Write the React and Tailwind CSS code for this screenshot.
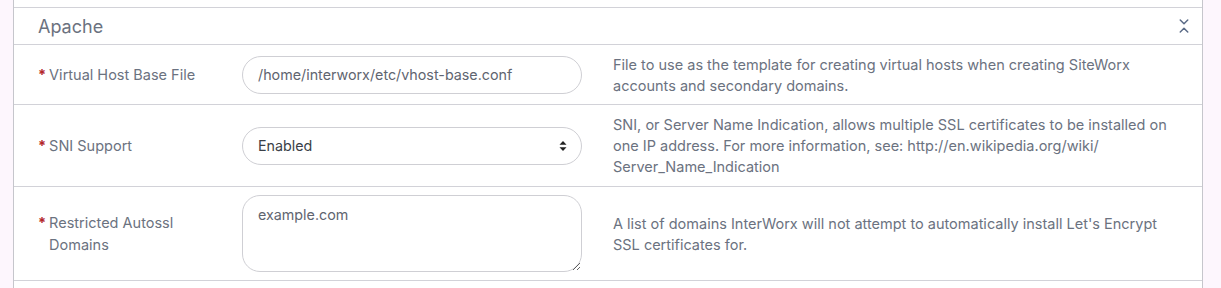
import { ChevronsDownUp } from 'lucide-react';

const rows = [
  {
    label: ['Virtual Host Base File'],
    kind: 'input',
    value: '/home/interworx/etc/vhost-base.conf',
    height: 'h-[60px]',
    desc: ['File to use as the template for creating virtual hosts when creating SiteWorx', 'accounts and secondary domains.'],
  },
  {
    label: ['SNI Support'],
    kind: 'select',
    value: 'Enabled',
    height: 'h-[82px]',
    desc: [
      'SNI, or Server Name Indication, allows multiple SSL certificates to be installed on',
      'one IP address. For more information, see: http://en.wikipedia.org/wiki/',
      'Server_Name_Indication',
    ],
  },
  {
    label: ['Restricted Autossl', 'Domains'],
    kind: 'textarea',
    value: 'example.com',
    height: 'h-[94px]',
    desc: ["A list of domains InterWorx will not attempt to automatically install Let's Encrypt", 'SSL certificates for.'],
  },
];

function Field({ row }) {
  if (row.kind === 'select') {
    return (
      <div className="relative w-[340px]">
        <select
          defaultValue={row.value}
          className="h-[38px] w-full appearance-none rounded-full border border-[#cfcfd4] bg-white pl-[15px] pr-8 text-[14.3px] text-[#3a3f47] outline-none"
        >
          <option>Enabled</option>
          <option>Disabled</option>
        </select>
        <svg className="pointer-events-none absolute right-[15px] top-1/2 -translate-y-1/2" width="8" height="11" viewBox="0 0 8 11">
          <path d="M4 0.5 L7.5 4.3 L0.5 4.3 Z" fill="#222" />
          <path d="M4 10.5 L7.5 6.7 L0.5 6.7 Z" fill="#222" />
        </svg>
      </div>
    );
  }
  if (row.kind === 'textarea') {
    return (
      <textarea
        defaultValue={row.value}
        className="block h-[77px] w-[340px] rounded-[18px] border border-[#cfcfd4] bg-white px-[15px] pt-[8px] text-[14.3px] leading-[21px] text-[#5f6570] outline-none"
      />
    );
  }
  return (
    <input
      defaultValue={row.value}
      className="h-[38px] w-[340px] rounded-full border border-[#cfcfd4] bg-white px-[15px] text-[14.3px] text-[#5f6570] outline-none"
    />
  );
}

export default function App() {
  return (
    <div className="h-[288px] w-full overflow-hidden bg-[#fdf6fd] pl-[13px] pr-[18px] font-['Inter',sans-serif]">
      <div className="h-full border-x border-[#c6c6cc] bg-white">
        <div className="h-[7px]" />
        <div className="flex h-[38px] items-center justify-between border-y border-[#d2d2d8] pl-[24px] pr-[9px]">
          <span className="text-[18px] text-[#6b7280]">Apache</span>
          <ChevronsDownUp size={18} strokeWidth={2} className="text-[#5b6b87]" />
        </div>
        {rows.map((row, i) => (
          <div key={i} className={`${row.height} flex items-center border-b border-[#d2d2d8] pl-[24px]`}>
            <div className="flex w-[204px] shrink-0 gap-[3px] text-[14.5px] leading-[22px] text-[#6b7280]">
              <span className="font-bold text-[#b3262a]">*</span>
              <span>
                {row.label.map((l, j) => (
                  <span key={j} className="block">{l}</span>
                ))}
              </span>
            </div>
            <Field row={row} />
            <div className="ml-[31px] text-[14.5px] leading-[21px] text-[#6b7280]">
              {row.desc.map((d, j) => (
                <span key={j} className="block whitespace-nowrap">{d}</span>
              ))}
            </div>
          </div>
        ))}
      </div>
    </div>
  );
}
